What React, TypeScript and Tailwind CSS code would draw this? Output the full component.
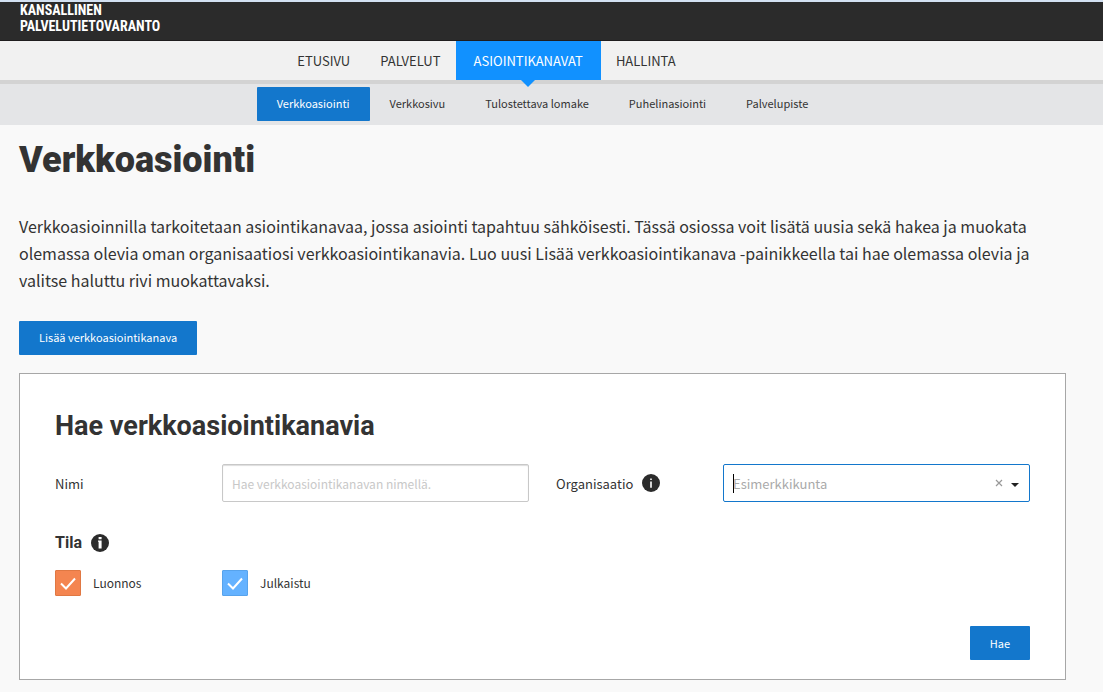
import { useState } from 'react';
import type { ReactNode } from 'react';

const mainNav = ['Etusivu', 'Palvelut', 'Asiointikanavat', 'Hallinta'];

const channels = [
  'Verkkoasiointi',
  'Verkkosivu',
  'Tulostettava lomake',
  'Puhelinasiointi',
  'Palvelupiste',
];

const InfoButton = ({ label, bold = false }: { label: string; bold?: boolean }) => (
  <button type="button" aria-label={label} className="h-[18px] w-[18px] shrink-0">
    <svg viewBox="0 0 18 18" className="block h-full w-full">
      <circle cx="9" cy="9" r="9" fill="#2b2b2b" />
      {bold ? (
        <path d="M7.6 3h3v2.2h-3zM7 6.4h3.6v8h-3V7.8H7z" fill="#fff" />
      ) : (
        <path d="M8.2 4.4h1.6V6H8.2zM8.2 7.4h1.6v6.4H8.2z" fill="#fff" />
      )}
    </svg>
  </button>
);

type StatusProps = {
  id: string;
  children: ReactNode;
  checked: boolean;
  onChange: (checked: boolean) => void;
  color: string;
};

const StatusCheckbox = ({ id, children, checked, onChange, color }: StatusProps) => (
  <div className="col-span-2 flex items-center gap-3">
    <div className="relative h-[26px] w-[26px]">
      <input
        type="checkbox"
        id={id}
        checked={checked}
        onChange={(e) => onChange(e.target.checked)}
        className={`block h-[26px] w-[26px] appearance-none rounded-[1px] border ${color}`}
      />
      {checked && (
        <svg viewBox="0 0 26 26" className="pointer-events-none absolute inset-0 h-full w-full">
          <path d="M6 13.5 L11 18.5 L20 8.5" fill="none" stroke="#fff" strokeWidth="2" />
        </svg>
      )}
    </div>
    <label htmlFor={id} className="text-xs leading-5">
      {children}
    </label>
  </div>
);

const App = () => {
  const [name, setName] = useState('');
  const [organization, setOrganization] = useState('esimerkkikunta');
  const [draft, setDraft] = useState(true);
  const [published, setPublished] = useState(true);

  return (
    <div className="min-h-screen bg-[#f9f9f9] font-['Noto_Sans_CJK_SC',sans-serif] text-[13px] leading-5 text-[#333]">
      <header className="border-t-2 border-b border-t-[#d3e1f2] border-b-[#1f1d1e] bg-[#2b2b2b] px-5 pb-1.5">
        <a
          href="#"
          className="block font-['Liberation_Sans_Narrow','Roboto_Condensed','Noto_Sans_CJK_SC',sans-serif] text-sm leading-4 font-bold text-white"
        >
          KANSALLINEN
          <br />
          PALVELUTIETOVARANTO
        </a>
      </header>

      <nav className="flex h-[43px] justify-center border-b-4 border-[#d3d3d3] bg-[#f1f1f1] pr-[130px] leading-5 uppercase">
        {mainNav.map((item) =>
          item === 'Asiointikanavat' ? (
            <a key={item} href="#" className="relative flex items-center bg-[#1191ff] px-[18px] text-white">
              {item}
              <svg viewBox="0 0 14 7" className="absolute top-full left-1/2 h-[7px] w-[14px] -translate-x-1/2">
                <path d="M0 0h14L7 7z" fill="#1191ff" />
              </svg>
            </a>
          ) : (
            <a key={item} href="#" className="flex items-center px-[15px]">
              {item}
            </a>
          )
        )}
      </nav>

      <nav className="flex h-[41px] items-center justify-center bg-[#e4e5e7] pr-[18px] pb-px text-[11px] leading-5">
        {channels.map((item) => (
          <a
            key={item}
            href="#"
            className={
              item === 'Verkkoasiointi'
                ? 'rounded-[1px] bg-[#1377cc] px-5 pt-1.5 pb-2 text-white'
                : 'px-5 pt-1.5 pb-2'
            }
          >
            {item}
          </a>
        ))}
      </nav>

      <main className="pt-[13px] pr-[37px] pb-3 pl-[19px]">
        <h1 className="font-['Roboto',sans-serif] text-4xl leading-[44px] font-black">Verkkoasiointi</h1>

        <p className="mt-[31px] text-base leading-[27px]">
          Verkkoasioinnilla tarkoitetaan asiointikanavaa, jossa asiointi tapahtuu sähköisesti. Tässä osiossa voit
          lisätä uusia sekä hakea ja muokata olemassa olevia oman organisaatiosi verkkoasiointikanavia. Luo uusi
          Lisää verkkoasiointikanava -painikkeella tai hae olemassa olevia ja valitse haluttu rivi muokattavaksi.
        </p>

        <button
          type="button"
          className="mt-[27px] block rounded-[1px] bg-[#1377cc] px-5 pt-1.5 pb-2 text-[11px] leading-5 text-white"
        >
          Lisää verkkoasiointikanava
        </button>

        <form
          onSubmit={(e) => e.preventDefault()}
          className="mt-[18px] border border-[#a7a7a7] bg-white px-[35px] pt-9 pb-[19px]"
        >
          <h2 className="font-['Roboto',sans-serif] text-[27px] leading-8 font-bold">Hae verkkoasiointikanavia</h2>

          <div className="mt-[22px] grid grid-cols-12 items-center gap-x-[27px]">
            <label htmlFor="name" className="col-span-2 pt-0.5">
              Nimi
            </label>
            <input
              type="text"
              id="name"
              value={name}
              onChange={(e) => setName(e.target.value)}
              placeholder="Hae verkkoasiointikanavan nimellä."
              className="col-span-4 h-[38px] rounded-[2px] border border-[#c8c8c8] px-[9px] text-xs shadow-[inset_0_1px_1px_#ddd] placeholder:text-[#c8c8c8]"
            />

            <div className="col-span-2 flex items-center gap-[9px]">
              <label htmlFor="organization" className="pt-0.5">
                Organisaatio
              </label>
              <InfoButton label="Tietoa organisaatiosta" />
            </div>
            <div className="relative col-span-4">
              <select
                id="organization"
                value={organization}
                onChange={(e) => setOrganization(e.target.value)}
                className="block h-[38px] w-full appearance-none rounded-[2px] border border-[#1377cc] bg-white px-[9px] pt-0.5 text-[#aaa]"
              >
                <option value=""></option>
                <option value="esimerkkikunta">Esimerkkikunta</option>
              </select>
              <span className="absolute top-[10px] left-[10px] h-[19px] w-px bg-black" />
              <button
                type="button"
                aria-label="Tyhjennä"
                onClick={() => setOrganization('')}
                className="absolute top-[15px] right-[27px] h-2 w-2"
              >
                <svg viewBox="0 0 8 8" className="block h-full w-full">
                  <path d="M1 1l6 6M7 1l-6 6" stroke="#999" strokeWidth="1.2" />
                </svg>
              </button>
              <svg viewBox="0 0 8 4" className="pointer-events-none absolute top-[19px] right-[11px] h-1 w-2">
                <path d="M0 0h8L4 4z" fill="#222" />
              </svg>
            </div>
          </div>

          <div className="mt-[31px] flex items-center gap-[9px]">
            <h3 className="font-['Roboto',sans-serif] text-base leading-5 font-bold">Tila</h3>
            <InfoButton label="Tietoa tilasta" bold />
          </div>

          <div className="mt-[17px] grid grid-cols-12 gap-x-[27px]">
            <StatusCheckbox
              id="draft"
              checked={draft}
              onChange={setDraft}
              color="border-[#e07843] bg-[#f48550]"
            >
              Luonnos
            </StatusCheckbox>
            <StatusCheckbox
              id="published"
              checked={published}
              onChange={setPublished}
              color="border-[#57a3ec] bg-[#64b2ff]"
            >
              Julkaistu
            </StatusCheckbox>
          </div>

          <div className="mt-[30px] flex justify-end">
            <button
              type="submit"
              className="rounded-[1px] bg-[#1377cc] px-5 py-[7px] text-[11px] leading-5 text-white"
            >
              Hae
            </button>
          </div>
        </form>
      </main>
    </div>
  );
};

export default App;
